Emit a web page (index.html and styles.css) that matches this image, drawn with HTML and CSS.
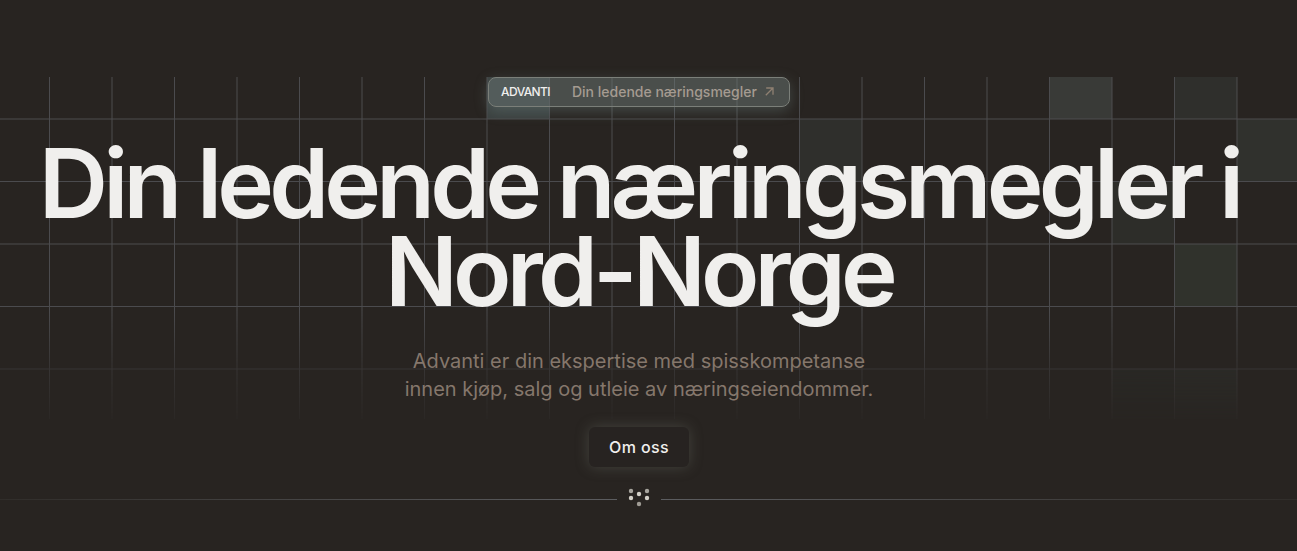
FILE: index.html
```html
<!DOCTYPE html>
<html lang="no">
<head>
<meta charset="utf-8">
<meta name="viewport" content="width=device-width, initial-scale=1">
<title>Advanti</title>
<link rel="stylesheet" href="styles.css">
</head>
<body>
<main class="page">
  <section class="hero">
    <svg class="grid-backdrop" aria-hidden="true">
      <defs>
        <pattern id="cells" width="125" height="125" x="49" y="41" patternUnits="userSpaceOnUse">
          <path d="M.5 0V125M63 0V125M0 1H125M0 63.5H125" fill="none" stroke="#4b4b4e" stroke-width="1"/>
        </pattern>
      </defs>
      <g>
        <rect x="487" y="0" width="62.5" height="42" fill="#3b4140"/>
        <rect x="1049.5" y="0" width="62.5" height="42" fill="#393a37"/>
        <rect x="1174.5" y="0" width="62.5" height="42" fill="#2f2f2c"/>
        <rect x="799.5" y="42" width="62.5" height="62.5" fill="#2f2f2c"/>
        <rect x="1237" y="42" width="62.5" height="62.5" fill="#30312d"/>
        <rect x="1112" y="104.5" width="62.5" height="62.5" fill="#2d2d29"/>
        <rect x="1174.5" y="167" width="62.5" height="62.5" fill="#30322c"/>
        <rect x="1112" y="292" width="62.5" height="62.5" fill="#2b2d29"/>
        <rect x="1174.5" y="292" width="62.5" height="62.5" fill="#2f322e"/>
      </g>
      <rect width="100%" height="100%" fill="url(#cells)"/>
    </svg>
    <a class="pill" href="#om">
      <span class="pill-brand">ADVANTI</span>
      <span class="pill-text">Din ledende næringsmegler</span>
      <svg class="pill-arrow" viewBox="0 0 10 10" aria-hidden="true"><path d="M.8 9.200 8 2M1.200 2H8V8.800" fill="none" stroke="currentColor" stroke-width="1.300"/></svg>
    </a>
    <h1 class="title">Din ledende næringsmegler i Nord-Norge</h1>
    <p class="lead">Advanti er din ekspertise med spisskompetanse innen kjøp, salg og utleie av næringseiendommer.</p>
  </section>
  <button class="cta" type="button">Om oss</button>
  <div class="divider">
    <span class="rule rule-left"></span>
    <svg class="dots" viewBox="0 0 22 22" aria-hidden="true">
      <g fill="#d3d0c8">
        <circle cx="3" cy="3" r="2.200" opacity=".75"/><circle cx="19" cy="3" r="2.200" opacity=".75"/>
        <circle cx="3" cy="10" r="2.200"/><circle cx="11" cy="6" r="2.200"/><circle cx="19" cy="10" r="2.200"/>
        <circle cx="11" cy="16" r="2.200" opacity=".7"/>
      </g>
    </svg>
    <span class="rule rule-right"></span>
  </div>
</main>
</body>
</html>
```
FILE: styles.css
```css
* { box-sizing: border-box; }

body {
  margin: 0;
  min-height: 100vh;
  background: #282421;
  color: #f0efed;
  font-family: Inter, "Liberation Sans", sans-serif;
}

.page {
  padding-top: 77px;
  display: flex;
  flex-direction: column;
  align-items: center;
  overflow-x: hidden;
}

.hero {
  position: relative;
  width: 100%;
  padding-right: 19px;
  padding-bottom: 16px;
  display: flex;
  flex-direction: column;
  align-items: center;
}

.grid-backdrop {
  position: absolute;
  inset: 0;
  width: 100%;
  height: 100%;
  -webkit-mask-image: linear-gradient(#000 68%, rgba(0, 0, 0, .45) 84%, rgba(0, 0, 0, .1));
  mask-image: linear-gradient(#000 68%, rgba(0, 0, 0, .45) 84%, rgba(0, 0, 0, .1));
}

.pill {
  position: relative;
  display: flex;
  align-items: center;
  height: 30px;
  padding: 0 14px 2px 12px;
  border: 1px solid #7b7f79;
  border-radius: 8px;
  background: rgba(108, 120, 117, .5);
  box-shadow: 0 4px 14px rgba(110, 130, 128, .4);
  text-decoration: none;
}

.pill-brand {
  margin-right: 22px;
  color: #f0efed;
  font-size: 12px;
  font-weight: 500;
  letter-spacing: -0.05em;
}

.pill-text {
  margin-right: 8px;
  color: #a59b91;
  font-size: 14px;
  font-weight: 500;
}

.pill-arrow {
  width: 10px;
  height: 10px;
  color: #8f8072;
}

.title {
  position: relative;
  max-width: 1240px;
  margin: 32px 0 0;
  font-size: 96px;
  font-weight: 600;
  line-height: 88px;
  letter-spacing: -0.05em;
  text-align: center;
}

.lead {
  position: relative;
  max-width: 500px;
  margin: 32px 0 0;
  color: #85776c;
  font-size: 20px;
  line-height: 28px;
  text-align: center;
}

.cta {
  position: relative;
  height: 40px;
  margin: 8px 19px 0 0;
  padding: 0 20px;
  border: 0;
  border-radius: 6px;
  background: #272321;
  box-shadow: 0 0 14px rgba(120, 125, 115, .35);
  color: #f0efed;
  font: 500 16px/24px Inter, "Liberation Sans", sans-serif;
  letter-spacing: 0.025em;
}

.divider {
  width: 100%;
  margin-top: 21px;
  display: flex;
  align-items: center;
  gap: 11px;
}

.rule {
  height: 1px;
}

.rule-left {
  flex: 1 1 0;
  background: linear-gradient(90deg, #302d2a, #5c5d60);
}

.rule-right {
  flex: 1 1 19px;
  background: linear-gradient(90deg, #5c5d60, #302d2a);
}

.dots {
  width: 22px;
  height: 22px;
}
```
